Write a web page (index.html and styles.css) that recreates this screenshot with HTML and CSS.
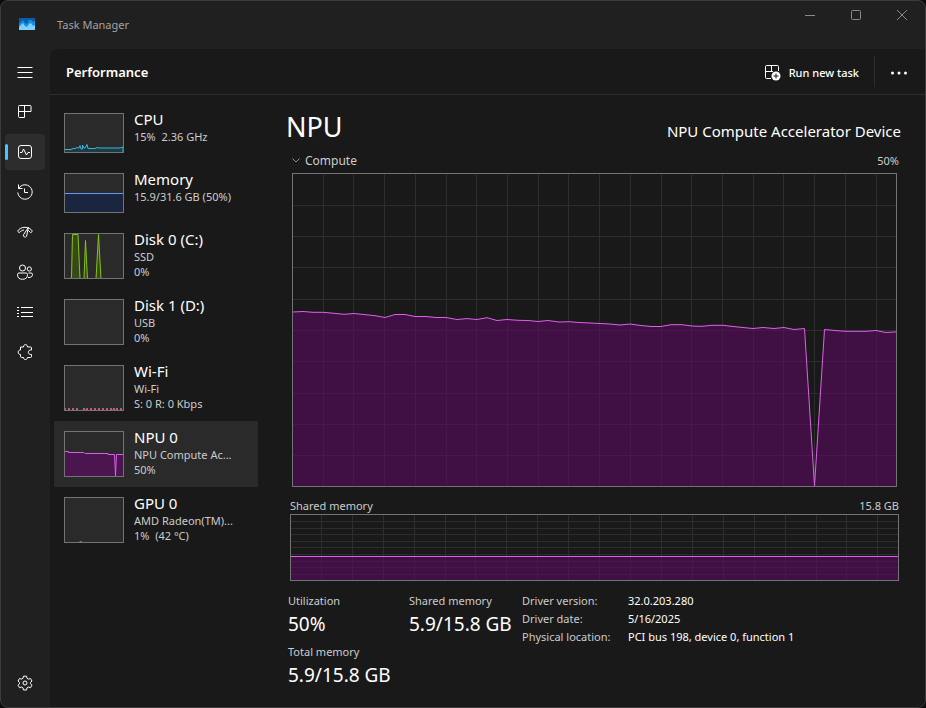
FILE: index.html
```
<!DOCTYPE html>
<html lang="en">
<head>
  <meta charset="UTF-8">
  <meta name="viewport" content="width=device-width, initial-scale=1.0">
  <title>Task Manager</title>
  <link rel="stylesheet" href="styles.css">
</head>
<body>
  <div class="window">
    <!-- Title bar -->
    <header class="titlebar">
      <svg class="app-icon" width="16" height="12" viewBox="0 0 16 12">
        <rect width="16" height="12" fill="#0a5cad"/>
        <path d="M0 6L2 4L4 2L6 5L8 6L10 2L12 2L14 4L16 3V12H0z" fill="#1590e0"/>
        <path d="M0 9L2 7L4 5L6 8L8 9L10 6L12 5L14 8L16 7V12H0z" fill="#7fd0fa"/>
      </svg>
      <span class="app-name">Task Manager</span>
      <div class="window-buttons">
        <button aria-label="Minimize"><svg width="10" height="10" viewBox="0 0 10 10"><path d="M0 5.5H10"/></svg></button>
        <button aria-label="Maximize"><svg width="10" height="10" viewBox="0 0 10 10"><rect x=".5" y=".5" width="9" height="9" rx="1"/></svg></button>
        <button aria-label="Close"><svg width="10" height="10" viewBox="0 0 10 10"><path d="M0 0L10 10M10 0L0 10"/></svg></button>
      </div>
    </header>

    <div class="body">
      <!-- Navigation rail -->
      <nav class="rail">
        <button aria-label="Menu"><svg viewBox="0 0 16 16"><path d="M.5 3.5H15.5M.5 8.5H15.5M.5 13.5H15.5"/></svg></button>
        <button aria-label="Processes"><svg viewBox="0 0 16 16"><path d="M2.5 1.5H13a1 1 0 0 1 1 1V7.5H1.5V2.5a1 1 0 0 1 1-1zM7.5 1.5V13.5H2.5a1 1 0 0 1-1-1V7.5"/></svg></button>
        <button class="active" aria-label="Performance"><svg viewBox="0 0 16 16"><rect x="1.5" y="1.5" width="13" height="13" rx="2.5"/><path d="M3 8.5H5L6.5 5L9.5 11L11 8.5H13"/></svg></button>
        <button aria-label="App history"><svg viewBox="0 0 16 16"><path d="M1.5 .5V4.5H5.5M1.8 4.3A7.2 7.2 0 1 1 .8 8.5M7.5 4.5V8.5H11"/></svg></button>
        <button aria-label="Startup apps"><svg viewBox="0 0 16 16"><path d="M.6 7.2C3.500 2 12.500 2 15.400 7.200L13.800 8.700L11.200 6.300M.6 7.200L2.200 8.700C3.500 7.200 5 6.300 7 6M11.300 3.500L6.600 10.600A1.700 1.700 0 0 0 9.600 12.200z"/></svg></button>
        <button aria-label="Users"><svg viewBox="0 0 16 16"><circle cx="5.5" cy="4" r="3"/><circle cx="12.3" cy="5" r="2.1"/><path d="M2 9H9a1.5 1.5 0 0 1 1.5 1.5C10.500 14 8.500 15.300 5.500 15.300S.5 14 .5 10.500A1.500 1.500 0 0 1 2 9zM11.500 9H14a1.500 1.500 0 0 1 1.500 1.500C15.500 12.500 14 13.800 11 13.500"/></svg></button>
        <button aria-label="Details"><svg viewBox="0 0 16 16"><path d="M4 3.500H16M4 8.500H16M4 12.500H16M0 3.500H2M0 6.500H2M0 9.500H2M0 12.500H2"/></svg></button>
        <button aria-label="Services"><svg viewBox="0 0 16 16"><path d="M3.500 3H6.500C6.500 1.500 7.300 .6 8.500 .6S10.500 1.500 10.500 3H13.500a1 1 0 0 1 1 1V6C12.500 5.700 11.300 6.800 11.300 8.300S12.500 10.700 14.500 10.500V12.500a1 1 0 0 1-1 1H10.500C10.500 14.800 9.700 15.500 8.500 15.500S6.500 14.800 6.500 13.500H4.500a1 1 0 0 1-1-1V10.500C2 10.500 1.200 9.500 1.200 8.200S2 6 3.500 6z"/></svg></button>
        <button class="settings" aria-label="Settings"><svg viewBox="0 0 16 16"><circle cx="8" cy="8" r="2"/><path d="M6.500 1.200H9.500L10 3.300L11.400 4.100L13.500 3.500L15 6L13.500 7.500V8.800L15 10.200L13.500 12.700L11.400 12L10 12.900L9.500 15H6.500L6 12.900L4.600 12L2.500 12.700L1 10.200L2.500 8.800V7.500L1 6L2.500 3.500L4.600 4.100L6 3.300z"/></svg></button>
      </nav>

      <div class="page">
        <!-- Command bar -->
        <div class="commandbar">
          <h1>Performance</h1>
          <button class="run-task">
            <svg width="16" height="16" viewBox="0 0 16 16">
              <path d="M6 13.500H1.500a1 1 0 0 1-1-1V1.500a1 1 0 0 1 1-1H12.500a1 1 0 0 1 1 1V6M.5 6.500H8M6.500 .5V7" fill="none" stroke="#fff"/>
              <circle cx="11" cy="11" r="4.500" fill="#fff"/>
              <path d="M11 8.500V13.500M8.500 11H13.500" stroke="#191919"/>
            </svg>
            Run new task
          </button>
          <button class="more" aria-label="More options"><svg width="18" height="4" viewBox="0 0 18 4"><circle cx="2.500" cy="2" r="1.500"/><circle cx="9" cy="2" r="1.500"/><circle cx="15.500" cy="2" r="1.500"/></svg></button>
        </div>

        <div class="content">
          <!-- Device list -->
          <div class="devices">
            <button class="device">
              <svg class="thumb short cpu" viewBox="0 0 58 38" preserveAspectRatio="none"><path d="M-1 35.500H6L8 34.500H10L12 33.500L14 34L15 31.500L16 35L17.500 35V31L19 34L20 34L22 30.500L23 34.500H30L32 33.500L34 34H55L58 33V39H-1z"/></svg>
              <span class="device-text"><strong>CPU</strong><span>15%&nbsp; 2.36 GHz</span></span>
            </button>
            <button class="device">
              <svg class="thumb short memory" viewBox="0 0 58 38" preserveAspectRatio="none"><path d="M-.5 19.500H59V39H-.5z"/></svg>
              <span class="device-text"><strong>Memory</strong><span>15.9/31.6 GB (50%)</span></span>
            </button>
            <button class="device">
              <svg class="thumb disk" viewBox="0 0 58 44" preserveAspectRatio="none"><path d="M5 45L6.500 43L7.500 .5H13L15 45H19L20.500 6.500L22.500 45H31L33.500 .5L36 45z"/></svg>
              <span class="device-text"><strong>Disk 0 (C:)</strong><span>SSD</span><span>0%</span></span>
            </button>
            <button class="device">
              <svg class="thumb disk" viewBox="0 0 58 44"></svg>
              <span class="device-text"><strong>Disk 1 (D:)</strong><span>USB</span><span>0%</span></span>
            </button>
            <button class="device">
              <svg class="thumb wifi" viewBox="0 0 58 44" preserveAspectRatio="none"><path d="M-1 46L0 42L1 46H3L4 42L5 46H7L8 42L9 46H11L12 42L13 46H18L19 42L20 46L22 42L23 46H25L26 42L27 46H29L30 42L31 46H33L34 42L35 46H37L38 42L39 46H41L42 42L43 46H45L46 42L47 46L49 42L50 46L52 42L53 46H55L56 42L57 46"/></svg>
              <span class="device-text"><strong>Wi-Fi</strong><span>Wi-Fi</span><span>S: 0 R: 0 Kbps</span></span>
            </button>
            <button class="device selected">
              <svg class="thumb npu" viewBox="0 0 58 44" preserveAspectRatio="none"><path d="M-.5 19.500H3.500V20.500H19L20 21.500H43V22.500H49.500L50.500 44L51.500 22.500H59V45H-.5z"/></svg>
              <span class="device-text"><strong>NPU 0</strong><span>NPU Compute Ac...</span><span>50%</span></span>
            </button>
            <button class="device">
              <svg class="thumb npu" viewBox="0 0 58 44" preserveAspectRatio="none"><path d="M14 45L15.500 43L17 45zM21 45L22 44L23 45z"/></svg>
              <span class="device-text"><strong>GPU 0</strong><span>AMD Radeon(TM)...</span><span>1%&nbsp; (42 °C)</span></span>
            </button>
          </div>

          <!-- NPU details -->
          <main class="details">
            <div class="details-head">
              <h2>NPU</h2>
              <span class="device-name">NPU Compute Accelerator Device</span>
            </div>

            <div class="engine-head">
              <button class="engine">
                <svg width="8" height="5" viewBox="0 0 8 5"><path d="M.5 .5L4 4L7.500 .5"/></svg>
                Compute
              </button>
              <span>50%</span>
            </div>
            <svg class="chart compute" viewBox="0 0 603 312" preserveAspectRatio="none">
              <path class="grid" d="M30.500 0V312M60.500 0V312M91.500 0V312M122.500 0V312M153.500 0V312M183.500 0V312M214.500 0V312M245.500 0V312M275.500 0V312M306.500 0V312M337.500 0V312M368.500 0V312M398.500 0V312M429.500 0V312M460.500 0V312M490.500 0V312M521.500 0V312M552.500 0V312M583.500 0V312M0 31.500H603M0 62.500H603M0 93.500H603M0 125.500H603M0 156.500H603M0 187.500H603M0 219.500H603M0 250.500H603M0 281.500H603"/>
              <path class="usage" d="M-.5 138L10 137.500L20 138.300L30 138.300L41 139.300L51 140.300L61 139.500L71 140.500L82 141.700L92 143.500L102 140.500L112 140.500L122 142.500L133 142.500L143 143.500L153 143.500L164 145.500L174 144.600L184 145.500L194 143.700L204 146.500L214 145.500L225 146.300L235 146.500L245 147.500L255 146.500L266 148L276 147.700L286 148.500L297 149L307 149.500L317 150L327 151L337 150L348 151.500L358 152.500L368 152.500L378 150.700L389 150.700L399 152L409 152.300L419 151.300L430 151.300L440 152.500L450 153.500L460 154.500L470 153.500L481 154.500L491 153.500L501 155.500L511.500 154.500L521.500 312L531.500 155.500L542 156.500L552 157.300L563 157.300L573 157.300L583 156.500L593 158.500L604 157.800V313H-.5z"/>
            </svg>

            <div class="memory-head"><span>Shared memory</span><span>15.8 GB</span></div>
            <svg class="chart shared" viewBox="0 0 607 65" preserveAspectRatio="none">
              <path class="grid" d="M30.500 0V65M61.500 0V65M92.500 0V65M123.500 0V65M154.500 0V65M184.500 0V65M215.500 0V65M246.500 0V65M277.500 0V65M308.500 0V65M339.500 0V65M370.500 0V65M401.500 0V65M432.500 0V65M463.500 0V65M494.500 0V65M525.500 0V65M555.500 0V65M586.500 0V65M0 6.500H607M0 13.500H607M0 19.500H607M0 26.500H607M0 32.500H607M0 39.500H607M0 46.500H607M0 52.500H607M0 59.500H607"/>
              <path class="usage" d="M-.5 41.500H608V66H-.5z"/>
            </svg>

            <div class="stats">
              <dl class="figures">
                <div><dt>Utilization</dt><dd>50%</dd></div>
                <div><dt>Shared memory</dt><dd>5.9/15.8 GB</dd></div>
                <div><dt>Total memory</dt><dd>5.9/15.8 GB</dd></div>
              </dl>
              <dl class="driver">
                <dt>Driver version:</dt><dd>32.0.203.280</dd>
                <dt>Driver date:</dt><dd>5/16/2025</dd>
                <dt>Physical location:</dt><dd>PCI bus 198, device 0, function 1</dd>
              </dl>
            </div>
          </main>
        </div>
      </div>
    </div>
  </div>
</body>
</html>
```
FILE: styles.css
```
* {
  box-sizing: border-box;
}

body {
  margin: 0;
  background: #0c0c0c;
  color: #fff;
  font-family: "Segoe UI", "Noto Sans", "Open Sans", sans-serif;
  font-size: 11px;
}

button {
  padding: 0;
  border: 0;
  background: none;
  color: inherit;
  font: inherit;
}

h1, h2, dl, dt, dd {
  margin: 0;
}

/* Window */
.window {
  display: flex;
  flex-direction: column;
  min-height: 100vh;
  border: 1px solid #3c3c3c;
  border-radius: 8px;
  background: #202020;
  overflow: hidden;
}

.titlebar {
  display: flex;
  align-items: center;
  height: 48px;
  padding: 0 0 2px 18px;
}

.app-name {
  margin-left: 22px;
  color: #a3a3a3;
}

.window-buttons {
  display: flex;
  align-self: flex-start;
  margin-left: auto;
}

.window-buttons button {
  display: flex;
  align-items: center;
  justify-content: center;
  width: 46px;
  height: 28px;
}

.window-buttons svg {
  fill: none;
  stroke: #8a8a8a;
}

.body {
  display: flex;
  flex: 1;
}

/* Navigation rail */
.rail {
  display: flex;
  flex-direction: column;
  gap: 4px;
  width: 49px;
  padding: 5px 4px 6px;
}

.rail button {
  position: relative;
  display: flex;
  align-items: center;
  justify-content: center;
  width: 40px;
  height: 36px;
  border-radius: 4px;
}

.rail svg {
  width: 16px;
  height: 16px;
  fill: none;
  stroke: #fff;
}

.rail .active {
  background: #2d2d2d;
}

.rail .active::before {
  content: "";
  position: absolute;
  left: 0;
  top: 10px;
  width: 3px;
  height: 16px;
  border-radius: 2px;
  background: #4cc2ff;
}

.rail .settings {
  margin-top: auto;
}

/* Page */
.page {
  display: flex;
  flex-direction: column;
  flex: 1;
  min-width: 0;
  border-top-left-radius: 8px;
  background: #191919;
}

.commandbar {
  display: flex;
  align-items: center;
  height: 46px;
  padding-left: 16px;
  border-bottom: 1px solid #2d2d2d;
}

.commandbar h1 {
  margin-right: auto;
  font-size: 13px;
  font-weight: 600;
}

.run-task {
  display: flex;
  align-items: center;
  gap: 8px;
  padding: 2px 15px 0 0;
  font-weight: 500;
}

.more {
  display: flex;
  align-items: center;
  justify-content: center;
  width: 51px;
  height: 31px;
  padding: 2px 2px 0 0;
  border-left: 1px solid #2d2d2d;
}

.more svg {
  fill: #fff;
}

.content {
  display: flex;
  flex: 1;
}

/* Device list */
.devices {
  width: 208px;
  padding: 8px 0 0 4px;
}

.device {
  display: flex;
  gap: 10px;
  width: 100%;
  padding: 6px 10px 10px;
  text-align: left;
}

.device.selected {
  background: #2a2a2a;
}

.thumb {
  flex: none;
  width: 60px;
  height: 46px;
  margin-top: 4px;
  border: 1px solid #737373;
  background: #2a2a2a;
}

.thumb.short {
  height: 40px;
}

.cpu {
  fill: #1d3b45;
  stroke: #3cb4d8;
}

.memory {
  fill: #1a263f;
  stroke: #5a9bf5;
}

.disk {
  fill: #37491a;
  stroke: #86c414;
}

.wifi {
  fill: #6b2f42;
  stroke: #e0688a;
}

.npu {
  fill: #4b164f;
  stroke: #d65fe4;
}

.device-text {
  display: flex;
  flex-direction: column;
  height: 50px;
  min-width: 0;
  margin-bottom: -10px;
  color: #ccc;
  line-height: 15px;
  white-space: nowrap;
}

.device-text strong {
  color: #fff;
  font-size: 15px;
  font-weight: 400;
  line-height: 20px;
}

/* Details */
.details {
  display: flex;
  flex-direction: column;
  flex: 1;
  min-width: 0;
  padding: 14px 24px 18px 28px;
}

.details-head {
  display: flex;
  align-items: baseline;
  justify-content: space-between;
  height: 36px;
  line-height: 36px;
}

.details-head h2 {
  font-size: 27px;
  font-weight: 400;
}

.device-name {
  font-size: 15px;
}

.engine-head,
.memory-head {
  display: flex;
  align-items: center;
  justify-content: space-between;
  margin: 0 2px 0 4px;
  color: #ccc;
}

.engine-head {
  height: 20px;
  margin: 5px 2px 3px 6px;
}

.engine {
  display: flex;
  align-items: center;
  gap: 5px;
  font-size: 12px;
}

.engine svg {
  fill: none;
  stroke: #8a8a8a;
}

.memory-head {
  height: 18px;
  margin-top: 9px;
}

.chart {
  display: block;
  border: 1px solid #737373;
}

.chart.compute {
  flex: 1 1 0;
  min-height: 200px;
  margin: 0 4px 0 6px;
}

.chart.shared {
  height: 67px;
  margin: 0 2px 0 4px;
}

.grid {
  fill: none;
  stroke: #2d2d2d;
  shape-rendering: crispEdges;
}

.usage {
  fill: rgba(90, 8, 96, 0.6);
  stroke: #dc62e8;
  vector-effect: non-scaling-stroke;
}

/* Figures under the charts */
.stats {
  display: flex;
  margin: 11px 0 0 2px;
  line-height: 18px;
}

.stats dt {
  color: #ccc;
}

.figures {
  display: grid;
  grid-template-columns: 121px 113px;
  row-gap: 5px;
}

.figures dd {
  font-size: 19px;
  line-height: 28px;
}

.driver {
  display: grid;
  grid-template-columns: 106px auto;
  align-content: start;
}
```
